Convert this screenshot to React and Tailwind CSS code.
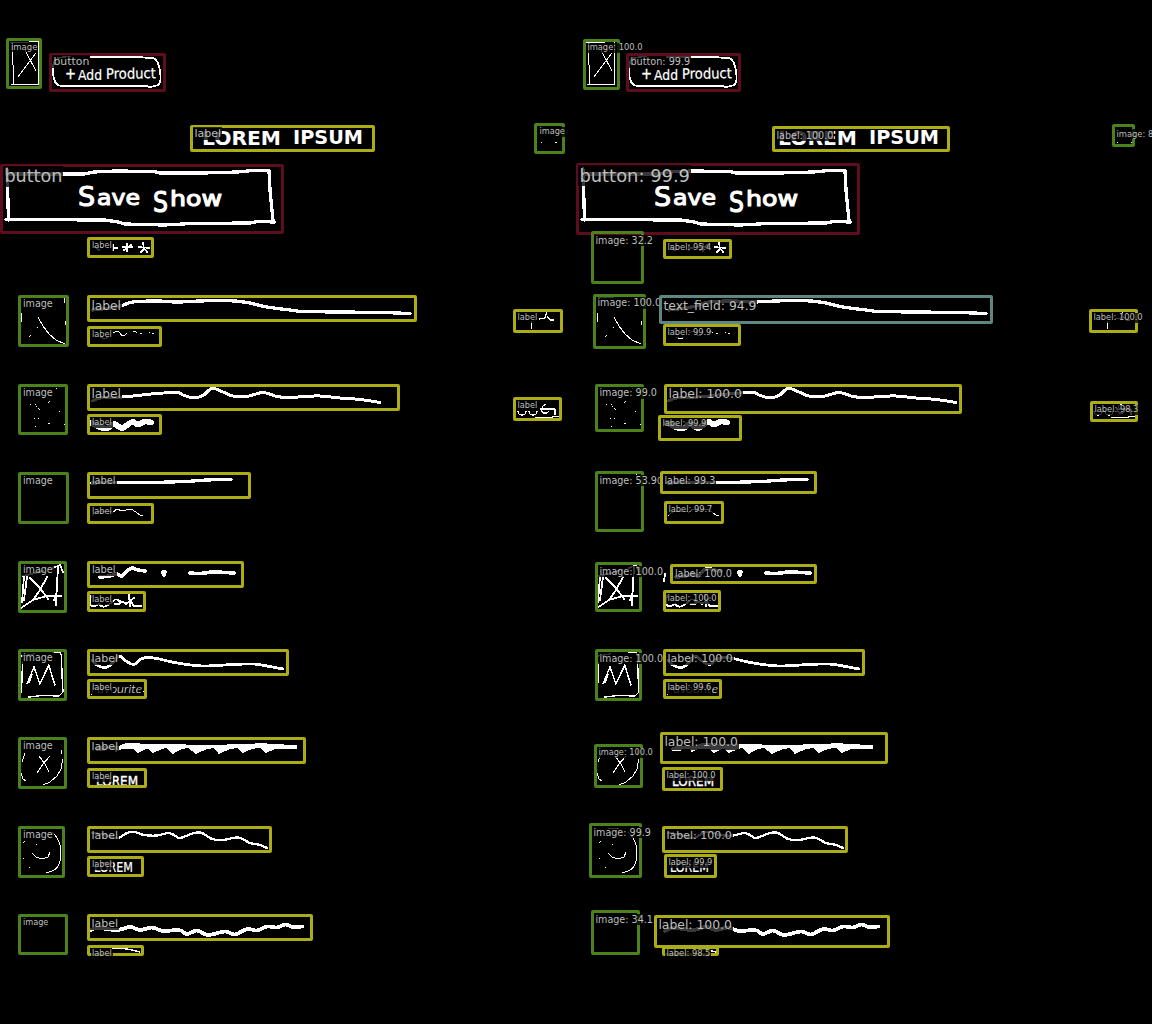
import React from "react";

const BORDER = {
  image: "border-[#4c821c]",
  label: "border-[#acac14]",
  button: "border-[#5e0d1e]",
  text_field: "border-[#5f8781]",
};

// [kind, x, y, width, height, caption, captionX, captionBaseline, captionSize]
const TRUTH = [
  ["image", 6, 38, 36, 51, "image", 10.5, 49.5, 8.5],
  ["button", 49, 53, 117, 39, "button", 53, 65, 10.9],
  ["label", 190, 125, 185, 27, "label", 194, 137, 11],
  ["image", 534, 123, 31, 31, "image", 539, 134.5, 8.2],
  ["button", 0, 164, 284, 70, "button", 4, 182, 17.6],
  ["label", 87, 237, 67, 21, "label", 91.5, 248.5, 8.2],
  ["image", 18, 295, 51, 52, "image", 22.5, 307, 9.6],
  ["label", 87, 295, 330, 27, "label", 91, 309.5, 12.2],
  ["label", 87, 326, 75, 21, "label", 91.5, 337.5, 8.2],
  ["label", 513, 309, 50, 24, "label", 517, 320, 8.2],
  ["image", 18, 384, 50, 51, "image", 22.5, 396, 9.6],
  ["label", 87, 384, 313, 27, "label", 91, 398, 12.2],
  ["label", 87, 414, 75, 21, "label", 91.5, 425.5, 8.2],
  ["label", 513, 397, 49, 24, "label", 517, 408, 8.2],
  ["image", 18, 472, 51, 52, "image", 22.5, 484, 9.6],
  ["label", 87, 472, 164, 27, "label", 91.5, 484, 9.8],
  ["label", 87, 503, 67, 21, "label", 91.5, 514.5, 8.2],
  ["image", 18, 561, 49, 52, "image", 22.5, 573, 9.6],
  ["label", 87, 561, 157, 27, "label", 91.5, 573, 9.8],
  ["label", 87, 591, 59, 21, "label", 91.5, 602.5, 8.2],
  ["image", 18, 649, 49, 52, "image", 22.5, 661, 9.6],
  ["label", 87, 649, 202, 27, "label", 91, 661.5, 11],
  ["label", 87, 679, 60, 20, "label", 91.5, 690.5, 8.2],
  ["image", 18, 737, 49, 52, "image", 22.5, 749, 9.6],
  ["label", 87, 737, 219, 27, "label", 91, 749.5, 11],
  ["label", 87, 768, 60, 20, "label", 91.5, 779, 8.2],
  ["image", 18, 826, 47, 52, "image", 22.5, 838, 9.6],
  ["label", 87, 826, 185, 27, "label", 91, 838.5, 11],
  ["label", 87, 856, 57, 21, "label", 91.5, 867.5, 8.2],
  ["image", 18, 914, 50, 41, "image", 22.5, 925.5, 8.2],
  ["label", 87, 914, 226, 27, "label", 91, 926.5, 11],
  ["label", 87, 945, 57, 11, "label", 91.5, 956, 8.2],
];

const PREDICTED = [
  ["image", 7, 39, 37, 51, "image: 100.0", 11, 50, 8.3],
  ["button", 50, 53, 115, 39, "button: 99.9", 54, 65, 9.7],
  ["label", 196, 126, 178, 26, "label: 100.0", 200, 138.5, 9.6],
  ["image", 536, 124, 23, 23, "image: 8", 540, 136.5, 8.4],
  ["button", 0, 163, 284, 72, "button: 99.9", 3, 181, 17.9],
  ["image", 15, 231, 53, 53, "image: 32.2", 19, 243.5, 9.6],
  ["label", 87, 239, 69, 20, "label: 95.4", 91, 250.5, 8.3],
  ["image", 17, 294, 53, 55, "image: 100.0", 21, 306, 9.6],
  ["text_field", 83, 295, 334, 29, "text_field: 94.9", 87, 310.5, 12.4],
  ["label", 87, 324, 78, 22, "label: 99.9", 91, 335.5, 8.3],
  ["label", 513, 309, 49, 24, "label: 100.0", 517, 320.5, 8.3],
  ["image", 19, 384, 49, 48, "image: 99.0", 23, 396, 9.6],
  ["label", 88, 384, 298, 30, "label: 100.0", 92, 398.5, 12.4],
  ["label", 82, 415, 84, 26, "label: 99.9", 86, 426.5, 8.3],
  ["label", 514, 401, 48, 21, "label: 98.3", 518, 412.5, 8.3],
  ["image", 19, 471, 49, 61, "image: 53.9", 23, 483.5, 9.6, "0"],
  ["label", 84, 471, 157, 23, "label: 99.3", 88, 483.5, 9.6],
  ["label", 88, 501, 60, 23, "label: 99.7", 92, 512.5, 8.3],
  ["image", 19, 562, 47, 50, "image: 100.0", 23, 574.5, 9.6],
  ["label", 94, 564, 147, 20, "label: 100.0", 98.5, 576.5, 9.6],
  ["label", 87, 590, 58, 22, "label: 100.0", 91, 601.5, 8.3],
  ["image", 19, 649, 47, 52, "image: 100.0", 23, 661.5, 9.6],
  ["label", 87, 649, 202, 27, "label: 100.0", 91, 661.5, 11],
  ["label", 87, 679, 59, 20, "label: 99.6", 91, 690.5, 8.3],
  ["image", 18, 744, 49, 44, "image: 100.0", 22, 755, 8.2],
  ["label", 84, 732, 228, 32, "label: 100.0", 88, 746.5, 12.4],
  ["label", 86, 767, 61, 24, "label: 100.0", 90, 778.5, 8.3],
  ["image", 13, 823, 53, 55, "image: 99.9", 17, 835.5, 9.6],
  ["label", 86, 826, 186, 27, "label: 100.0", 90, 838.5, 11],
  ["label", 88, 854, 53, 24, "label: 99.9", 92, 865.5, 8.3],
  ["image", 15, 910, 49, 45, "image: 34.1", 19, 922.5, 9.6],
  ["label", 78, 915, 236, 33, "label: 100.0", 82, 929.5, 12.4],
  ["label", 86, 946, 57, 10, "label: 98.5", 90, 956.5, 8.3],
];

function Annotation({ item }) {
  const [kind, x, y, w, h, caption, cx, baseline, size, suffix] = item;
  const height = size * 1.2;
  return (
    <div
      className={`absolute rounded-[2px] border-[3.4px] ${BORDER[kind]}`}
      style={{ left: x, top: y, width: w, height: h }}
    >
      <span
        className="absolute whitespace-pre bg-black/78 px-px text-[#bebebe]"
        style={{
          left: cx - x - 3.6,
          top: baseline - y - 2.4 - size * 0.95,
          height,
          lineHeight: `${height}px`,
          fontSize: size,
        }}
      >
        {caption}
        {suffix && <span className="text-[8px]">{suffix}</span>}
      </span>
    </div>
  );
}

// Catmull-Rom curve through a list of points written as "x y x y ..."
function smooth(list) {
  const n = list.split(" ").map(Number);
  const p = [];
  for (let i = 0; i < n.length; i += 2) p.push([n[i], n[i + 1]]);
  let d = `M${p[0][0]} ${p[0][1]}`;
  for (let i = 0; i < p.length - 1; i++) {
    const a = p[i - 1] || p[i];
    const b = p[i];
    const c = p[i + 1];
    const e = p[i + 2] || c;
    d += `C${b[0] + (c[0] - a[0]) / 6} ${b[1] + (c[1] - a[1]) / 6} ${c[0] - (e[0] - b[0]) / 6} ${c[1] - (e[1] - b[1]) / 6} ${c[0]} ${c[1]}`;
  }
  return d;
}

// [stroke width, points]
const WAVES = [
  [3.3, "93 310 110 308 122 305.5 133 302 157 301 177 302 200 301 227 300.5 247 302.5 267 307 290 310 303 311.500 340 312 380 312.500 410 313.500"],
  [3, "92 401 101 398 122 397 133 396 157 393.5 177 392.5 183 395 193 397.8 203 395.5 212 388.5 223 392 233 396 247 396.5 263 392.5 277 396.5 290 397.8 303 396.5 320 396 340 398 360 399.500 380 402.500"],
  [3.3, "91 483 117 482.5 147 482.5 185 481.5 207 480 231 479.5"],
  [2.8, "92 660 97 665 105 667.5 113 663 119 656 126 661 134 664.5 141 659 147 657.5 157 658.5 177 663 203 666 233 664.5 253 664 267 666 283 669"],
  [2.3, "92 833 100 834 108 836 118 838 127 833 135 832 144 835 157 835.500 168 833 174 835 180 838 194 833 202 833 212 839 223 840 238 837.5 250 843 260 845 267 848"],
  [3.8, "89 931 97 928 117 930 130 927 140 930 152 927.5 163 931 179 930 187 934 197 930.5 208 935 225 931.5 235 934.5 247 929 257 930.5 267 926.5 277 927.5 285 924.5 293 927 302 926.500"],
  [3.6, "100 577 110 576 117 574 122 576 127 571 132 568 138 570 145 571"],
  [3.6, "190 573 200 573.500 213 572 225 572.5 234 573"],
  [3, "96 749 105 747 118 748 125 745 140 745 165 746 195 747 240 746.5 270 746.5 296 748"],
  [5.8, "91 423 100 427 107 428.5 114 424 122 428 132 422 138 424.5 145 421.5 151 422.5"],
  [1, "92 516 97 512 105 511 113 512 117 509 122 511 130 509 135 511.5 140 515 143 515.5"],
  [1.4, "113 948.5 127 949 140 952"],
];

const DOTS = [
  [29, 336], [30, 335], [37, 327], [30, 404], [35, 404], [36, 406], [38, 408], [39, 409],
  [34, 418], [38, 418], [35, 426], [48, 423], [49, 423], [59, 411], [49, 401], [48, 402],
  [56, 388], [64, 424], [60, 474], [541, 142], [555, 142], [556, 142], [541, 125],
  [23, 842], [24, 841], [36, 844], [23, 858], [29, 867], [136, 332], [140, 333],
  [141, 333], [149, 332], [152, 333], [153, 333], [91, 694], [143, 691],
];

function Sketch() {
  return (
    <svg
      className="absolute left-0 top-0"
      width="564"
      height="956"
      viewBox="0 0 564 956"
      fill="none"
      stroke="white"
      strokeLinecap="round"
      strokeLinejoin="round"
      shapeRendering="crispEdges"
    >
      {/* picture placeholder and product button */}
      <g strokeWidth="1">
        <path d="M10.500 43L38 41.500M12.500 44L13.500 84.500M11 84H39M38.500 41V84.500M36 53L18 77M25 50L36 71" />
        <path
          strokeWidth="1.800"
          d="M55 60Q51 68 54 79Q56 86 62 86H146Q151 88 158 85Q162 82 160 72Q159 60 153 58Q146 58 139 57L91 57M58 58L70 56"
        />
      </g>
      <g fill="white" fontFamily="DejaVu Sans" stroke="none">
        <text x="65" y="78.500" fontSize="15" stroke="white" strokeWidth=".4" textLength="11" lengthAdjust="spacingAndGlyphs">+</text>
        <text x="78" y="80" fontSize="14.500" textLength="24" stroke="white" strokeWidth=".2" lengthAdjust="spacingAndGlyphs">Add</text>
        <text x="106" y="79" fontSize="14.500" stroke="white" strokeWidth=".2" textLength="50" lengthAdjust="spacingAndGlyphs" transform="rotate(-1 106 79)">Product</text>
        <text x="202" y="144.500" fontSize="20" fontWeight="700" textLength="79" lengthAdjust="spacingAndGlyphs">LOREM</text>
        <text x="293" y="143.500" fontSize="20" fontWeight="700" textLength="70" lengthAdjust="spacingAndGlyphs">IPSUM</text>
        <g stroke="white" strokeWidth="1.100">
          <text x="78" y="206" fontSize="27">S</text>
          <text x="97" y="205" fontSize="22" textLength="43" lengthAdjust="spacingAndGlyphs">ave</text>
          <text x="153" y="211.500" fontSize="28" textLength="15" lengthAdjust="spacingAndGlyphs">S</text>
          <text x="170" y="206" fontSize="21" textLength="52" lengthAdjust="spacingAndGlyphs">how</text>
        </g>
        <text x="91" y="693" fontSize="12" fontFamily="Lato" fontStyle="italic" fontWeight="300" textLength="51" lengthAdjust="spacingAndGlyphs">Favourite</text>
        <text x="96" y="785.500" fontSize="14.500" stroke="white" strokeWidth=".4" textLength="42" lengthAdjust="spacingAndGlyphs">LOREM</text>
        <text x="94" y="872" fontSize="14.500" stroke="white" strokeWidth=".2" textLength="39" lengthAdjust="spacingAndGlyphs">LOREM</text>
      </g>

      {/* wide button outline */}
      <path
        strokeWidth="3.300"
        d="M7 169L8.500 220M9 174L84 174L94 172L116 171L154 171.500L160 173L203 173L238 172L252 170.500L269 170.500L270 190L273 221M6 219.500L105 220L118 222L125 224L164 225L192 223.500L250 223L258 221.500L275 222"
      />

      {/* rating */}
      <path
        strokeWidth="1.600"
        d="M95 247L99 250M113 245V250M113 248H117M123 247H132M127 244V251M124 250L131 245M139 247L149 248M143 243L144 249L141 252M144 248L147 252"
      />

      {WAVES.map(([width, points]) => (
        <path key={points} strokeWidth={width} d={smooth(points)} />
      ))}

      <path strokeWidth="3.600" d="M162.500 572H165L164 575Z" />
      {/* sagging teeth under the sixth title */}
      <path
        fill="white"
        strokeWidth="1.600"
        d="M97 750H104L108 747H113L116 751L122 748H134L138 752L144 749L148 748L153 752L160 749L166 747L173 753L180 749L188 747L196 753L205 749L214 747L219 753L228 749L237 747L243 752L252 748L261 747L266 752L276 748L296 747V746L262 744L240 745L200 746L180 745L150 745L131 744L118 747Z"
      />

      {/* broken and scribbled subtitles */}
      <path strokeWidth="1" d="M100 337L105 339L108 337M113 333L116 331.500L119 332L122 335.500L125 335L127 333M133 332L136 331.500" />
      <path strokeWidth="1.800" d="M91 596Q89 605 92 606T99 604Q102 608 106 606T111 603Q116 597 119 601T115 604M119 601L126 603M129 595L130 606M126 604L134 598M131 602L134 606H141M89 574L88 581" />

      {/* thumbnails */}
      <g strokeWidth="1">
        <path d="M38.500 318L43 326L49 334L56 340L65 344M22 297.500L54 296.500M64.500 298V303M21.500 313V322M65.500 321V325" />
        <path strokeWidth="1.800" d="M21 608L33 600L47 596L61 596M24 576L22 602M27 577L24 600M23 576L43 571M58 567L57 584L56 605M53 568L60 565L63 572M30 578L40 588L48 599M47 577L40 590L33 600M54 600L57 591" />
        <path strokeWidth="1.400" d="M21.500 692L22.500 663M22 656L34 654M53 652H60L61.500 656L62 675L63 692L59 696L42 695.500L29 697M27 684L34 667L40 684L45 673L49 665L52 676L55 685M29 683L32 674" />
        <path d="M25 753L22 762M21.500 774L23 779L26 781M61 750V754M62.500 760L61 769L57 776L50 782L43 785M39 756L45 764L49 772M50 756L43 764L37 773" />
        <path d="M32 828.500H43M52 832Q61 840 61 852Q61 868 52 871L46 873M32 853L36 857L42 859L48 857L50 852" />
      </g>

      {/* side captions */}
      <g strokeWidth="1.200">
        <path d="M531.500 322V328M539 319L545 318L547 311M547 316L550 320H554M516 312Q518 309 521 311M549 311H560" />
        <path d="M518 411Q518 415 522 415T526 411M529 411Q529 415 533 415T537 411M546 404L543 406L541 410L543 413H547L549 411M540 409H555V415M536 417.500H551L555 416.500H561" />
      </g>
      <g fill="white" stroke="none">
        {DOTS.map(([x, y]) => (
          <rect key={`${x}-${y}`} x={x} y={y} width="1" height="1" />
        ))}
      </g>
    </svg>
  );
}

function Panel({ items }) {
  return (
    <section className="relative h-[956px] w-[576px] shrink-0 overflow-hidden">
      <Sketch />
      {items.map((item) => (
        <Annotation key={`${item[1]}-${item[2]}`} item={item} />
      ))}
    </section>
  );
}

export default function App() {
  return (
    <main className="flex h-[1024px] w-[1152px] overflow-hidden bg-black font-['DejaVu_Sans',sans-serif]">
      <Panel items={TRUTH} />
      <Panel items={PREDICTED} />
    </main>
  );
}
